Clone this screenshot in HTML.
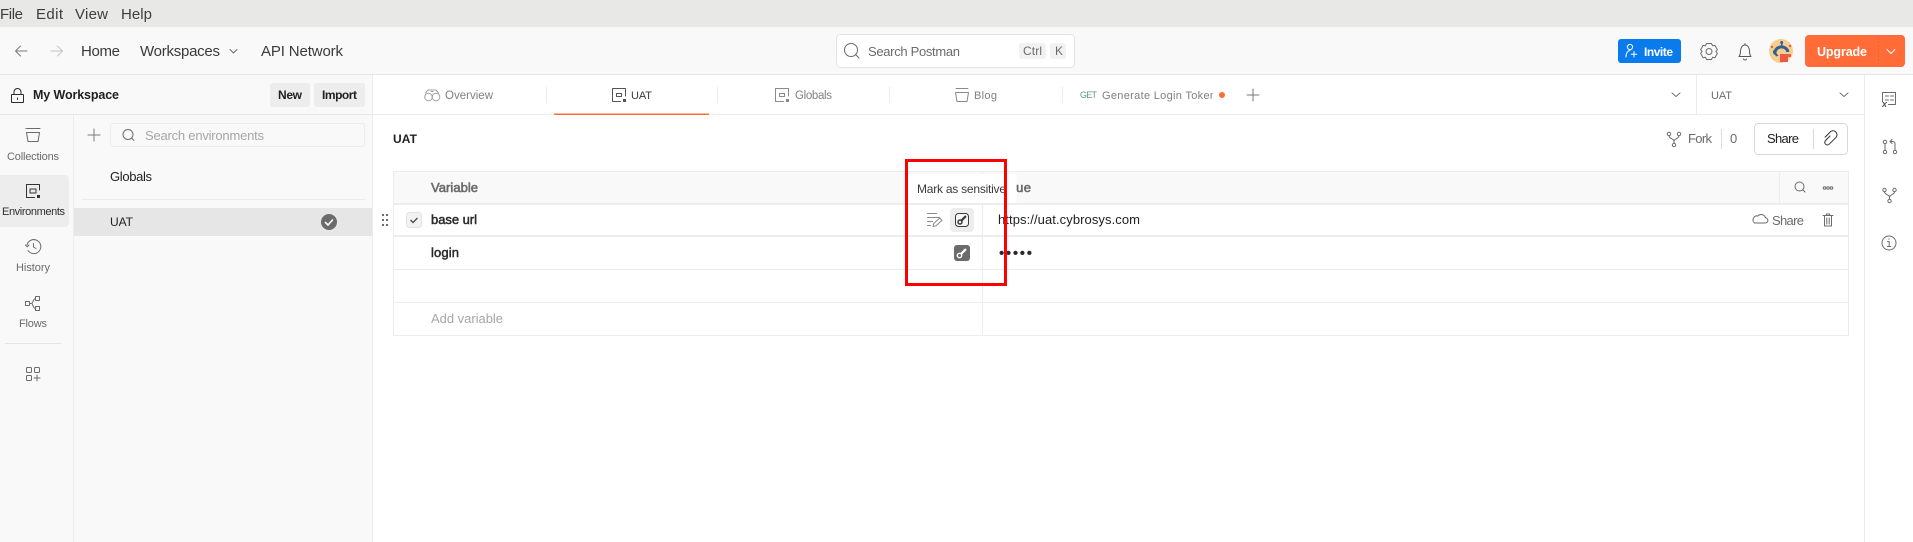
<!DOCTYPE html>
<html lang="en"><head><meta charset="utf-8"><title>Postman - UAT</title>
<style>
html,body{margin:0;padding:0;background:#fff;width:1913px;height:542px;overflow:hidden}
svg{display:block}
text{font-family:"Liberation Sans",Arial,sans-serif;font-size:13px;fill:#212121}
.b{font-weight:700}
.m{stroke:#2b2b2b;stroke-width:.5px;fill:#2b2b2b}
.mg{stroke:#6b6b6b;stroke-width:.6px;fill:#6b6b6b}
.g{fill:#6b6b6b}
.l{fill:#a6a6a6}
.s{font-size:12px}
.r{font-size:11px}
.t{font-size:11.5px}
.h{font-size:15px;fill:#3a3a3a}
.i{fill:none;stroke:#6b6b6b;stroke-width:1;stroke-linecap:round;stroke-linejoin:round}
</style></head><body>
<svg width="1913" height="542" viewBox="0 0 1913 542" xmlns="http://www.w3.org/2000/svg">
<defs><clipPath id="tc"><rect x="1100" y="85" width="113" height="20"/></clipPath></defs>

<!-- backgrounds -->
<rect width="1913" height="542" fill="#fff"/>
<rect width="1913" height="27" fill="#e8e8e7"/>
<rect y="27" width="1913" height="47" fill="#f9f9f9"/>
<rect y="74" width="1913" height="1" fill="#e6e6e6"/>
<rect y="75" width="373" height="467" fill="#f9f9f9"/>
<rect x="372" y="75" width="1" height="467" fill="#ededed"/>
<rect y="114" width="372" height="1" fill="#e6e6e6"/>
<rect x="373" y="114" width="1491" height="1" fill="#ededed"/>
<rect x="73" y="115" width="1" height="427" fill="#ededed"/>
<rect x="1864" y="75" width="1" height="467" fill="#ededed"/>

<!-- menu -->
<text x="0" y="19" textLength="23" style="font-size:15px;fill:#3d3d3d">File</text>
<text x="36" y="19" textLength="27" style="font-size:15px;fill:#3d3d3d">Edit</text>
<text x="75" y="19" textLength="33" style="font-size:15px;fill:#3d3d3d">View</text>
<text x="121" y="19" textLength="31" style="font-size:15px;fill:#3d3d3d">Help</text>

<!-- top header -->
<path class="i" d="M27 51H15.500M20.500 46l-5 5 5 5" style="stroke:#7a7a7a"/>
<path class="i" d="M51 51h11.500M57.500 46l5 5-5 5" style="stroke:#c4c4c4"/>
<text x="81" y="56" textLength="39" class="h">Home</text>
<text x="140" y="56" textLength="80" class="h">Workspaces</text>
<path class="i" d="M230 49.500l3.500 3.500 3.500-3.500"/>
<text x="261" y="56" textLength="82" class="h">API Network</text>

<!-- global search -->
<rect x="836.500" y="34.500" width="238" height="33" rx="4" fill="#fff" stroke="#e3e3e3"/>
<circle cx="851" cy="50" r="6.500" class="i"/><path class="i" d="M856 55l3 3"/>
<text x="868" y="56" textLength="92" class="g">Search Postman</text>
<rect x="1019" y="43" width="27" height="16" rx="3" fill="#f2f2f2"/>
<text x="1023" y="55" textLength="19" class="g s">Ctrl</text>
<rect x="1050" y="43" width="16" height="16" rx="3" fill="#f2f2f2"/>
<text x="1055" y="55" textLength="7" class="g s">K</text>

<!-- right header -->
<rect x="1618" y="39" width="63" height="24" rx="3" fill="#097bed"/>
<g class="i" style="stroke:#fff"><circle cx="1630" cy="47" r="2.600"/><path d="M1626 57c0-4 1.500-6 4-6.500M1634 51.500v5.500M1631.300 54.200h5.500"/></g>
<text x="1644" y="56" textLength="29" class="b s" style="fill:#fff">Invite</text>
<g class="i"><path d="M1706.500 43.500h5l1 2.200 2.400-.3 2.500 4.300-1.500 1.800 1.500 1.900-2.500 4.300-2.400-.4-1 2.200h-5l-1-2.200-2.400.4-2.500-4.300 1.500-1.900-1.500-1.800 2.500-4.300 2.400.3z"/><circle cx="1709" cy="51.500" r="3"/></g>
<g class="i" style="stroke:#555"><path d="M1739 56.500c1.300-1.500 1.500-3 1.500-5.500 0-3 1.800-6 4.500-6s4.500 3 4.500 6c0 2.500.2 4 1.500 5.500zM1743.500 59c.7 1.400 2.300 1.400 3 0M1745 43.500V45"/></g>
<circle cx="1781" cy="51" r="12" fill="#f6cf8e"/>
<path d="M1775 54a6.500 6 0 1 1 13-2" fill="none" stroke="#2f5f95" stroke-width="3"/>
<path d="M1773 50.500h3.500v3l2 2-2 1-3.500-3.500z" fill="#2f5f95"/>
<rect x="1781" y="41" width="1.500" height="5" fill="#2f5f95"/>
<circle cx="1781.700" cy="42.500" r="1.500" fill="#2f5f95"/>
<rect x="1780" y="54" width="8" height="8" fill="#ea5a48"/>
<rect x="1788" y="54" width="3" height="3" fill="#ea5a48"/>
<circle cx="1772" cy="47" r="1.200" fill="#ea5a48"/><circle cx="1790" cy="46" r="1.200" fill="#ea5a48"/>

<rect x="1805" y="35" width="100" height="32" rx="4" fill="#ff6c37"/>
<text x="1817" y="56" textLength="50" class="b" style="fill:#fff;font-size:12.500px">Upgrade</text>
<path d="M1878.500 38v26" stroke="#c9713a" stroke-dasharray="1.500 2"/>
<path class="i" d="M1887 49.500l4 4 4-4" style="stroke:#fff"/>

<!-- workspace row -->
<g class="i" style="stroke:#2b2b2b"><rect x="11.500" y="94.500" width="12" height="8" rx="0.500"/><path d="M14 94.500v-2.500a3.500 3.500 0 0 1 7 0v2.500"/><path d="M17.500 98v1.500"/></g>
<text x="33" y="99" textLength="86" class="b" style="font-size:12.500px">My Workspace</text>
<rect x="270" y="83" width="40" height="24" rx="3" fill="#ededed"/>
<text x="278" y="99" textLength="24" class="b s">New</text>
<rect x="314" y="83" width="51" height="24" rx="3" fill="#ededed"/>
<text x="322" y="99" textLength="35" class="b s">Import</text>

<!-- left rail -->
<g class="i"><path d="M26 128.500h14M26.500 132.500h13l-1.500 9h-10z"/></g>
<text x="7" y="160" textLength="52" class="g r">Collections</text>
<rect x="-4" y="175" width="73" height="52" rx="4" fill="#ededed"/>
<g class="i" style="stroke:#333"><path d="M39.500 190v-5.500h-13v13h8"/><rect x="30" y="189" width="6" height="4"/></g>
<rect x="37" y="195" width="3" height="3" fill="#333"/>
<text x="2" y="215" textLength="63" class="r" style="fill:#2f2f2f">Environments</text>
<g class="i"><path d="M27 245a7 7 0 1 1 1 5.500M25.500 245l1.800 1.800 1.700-1.800M33.500 243.500v3.500l2.500 1.500"/></g>
<text x="16" y="271" textLength="34" class="g r">History</text>
<g class="i"><rect x="25.500" y="301.500" width="4" height="4"/><rect x="35.500" y="296.500" width="4" height="4"/><rect x="35.500" y="306.500" width="4" height="4"/><path d="M29.500 303.500h2c1.500 0 1.500-5 4-5M29.500 303.500h2c1.500 0 1.500 5 4 5"/></g>
<text x="19" y="327" textLength="28" class="g r">Flows</text>
<rect x="5" y="343" width="56" height="1" fill="#e6e6e6"/>
<g class="i"><rect x="26.500" y="367.500" width="5" height="5" rx="1"/><rect x="34.500" y="367.500" width="5" height="5" rx="1"/><rect x="26.500" y="375.500" width="5" height="5" rx="1"/><path d="M37 375v6M34 378h6"/></g>

<!-- env list -->
<path class="i" d="M94 129v12M88 135h12" style="stroke:#7a7a7a"/>
<rect x="110.500" y="123.500" width="254" height="23" rx="2" fill="#f9f9f9" stroke="#ededed"/>
<circle cx="128" cy="134.500" r="5" class="i"/><path class="i" d="M132 138.500l2 2"/>
<text x="145" y="140" textLength="119" class="l">Search environments</text>
<text x="110" y="181" textLength="42">Globals</text>
<rect x="82" y="199" width="283" height="1" fill="#ededed"/>
<rect x="74" y="208" width="298" height="28" fill="#e6e6e6"/>
<text x="110" y="226" textLength="23" class="s">UAT</text>
<circle cx="329" cy="222" r="8" fill="#6b6b6b"/>
<path d="M325.500 222.500l2.500 2.500 4.500-5" fill="none" stroke="#fff" stroke-width="1.600" stroke-linecap="round" stroke-linejoin="round"/>

<!-- tabs -->
<g class="i" style="stroke:#a0a0a0"><circle cx="428.500" cy="97" r="3.800"/><circle cx="436" cy="97" r="3.800"/><path d="M425.500 93l2.500-3h8l2.500 3M431 91.500h2"/></g>
<text x="445" y="99" textLength="48" class="t" style="fill:#808080">Overview</text>
<rect x="546" y="87" width="1" height="16" fill="#ededed"/>
<g class="i" style="stroke:#555"><path d="M625.500 96v-7.500h-13v13h8"/><rect x="616.500" y="93.500" width="5" height="3"/></g>
<rect x="623" y="99" width="3" height="3" fill="#555"/>
<text x="631" y="99" textLength="21" class="r" style="fill:#3a3a3a">UAT</text>
<rect x="554" y="113.500" width="155" height="1.500" fill="#ff6c37"/>
<rect x="717" y="87" width="1" height="16" fill="#ededed"/>
<g class="i" style="stroke:#8a8a8a"><path d="M788.500 96v-7.500h-13v13h8"/><rect x="779.500" y="93.500" width="5" height="3"/></g>
<rect x="786" y="99" width="3" height="3" fill="#8a8a8a"/>
<text x="795" y="99" textLength="37" class="t" style="fill:#808080">Globals</text>
<rect x="889" y="87" width="1" height="16" fill="#ededed"/>
<g class="i" style="stroke:#8a8a8a"><path d="M956 88.500h12M955.500 92.500h13l-1.500 9h-10z"/></g>
<text x="974" y="99" textLength="23" class="r" style="fill:#808080">Blog</text>
<rect x="1062" y="87" width="1" height="16" fill="#ededed"/>
<text x="1080" y="98" textLength="17" style="font-size:9px;fill:#5a9e7c">GET</text>
<text x="1102" y="99" textLength="114" class="r" style="fill:#808080" clip-path="url(#tc)">Generate Login Token</text>
<circle cx="1222" cy="95" r="3" fill="#ff6c37"/>
<path class="i" d="M1253 89v12M1247 95h12" style="stroke:#7a7a7a"/>
<path class="i" d="M1672 93l4 3.500 4-3.500"/>
<rect x="1696" y="75" width="1" height="40" fill="#ededed"/>
<text x="1711" y="99" textLength="21" class="r" style="fill:#6b6b6b">UAT</text>
<path class="i" d="M1840 93l4 3.500 4-3.500"/>

<!-- title + actions -->
<text x="393" y="143" textLength="24" class="b" style="font-size:12px">UAT</text>
<g class="i"><circle cx="1669" cy="134" r="1.700"/><circle cx="1679" cy="134" r="1.700"/><circle cx="1674" cy="145" r="1.700"/><path d="M1669 135.700c0 3 5 3 5 5.500v2M1679 135.700c0 3-5 3-5 5.500"/></g>
<text x="1688" y="143" textLength="24" class="g">Fork</text>
<rect x="1721" y="129" width="1" height="20" fill="#dcdcdc"/>
<text x="1730" y="143" textLength="7" class="g">0</text>
<rect x="1754.500" y="123.500" width="93" height="31" rx="4" fill="#fff" stroke="#d8d8d8"/>
<text x="1767" y="143" textLength="32">Share</text>
<rect x="1813" y="129" width="1" height="20" fill="#d8d8d8"/>
<g class="i" style="stroke:#333"><path d="M1830 136l-4.500 4.500a2.600 2.600 0 0 0 3.700 3.700l7-7a4 4 0 0 0-5.600-5.600l-5.500 5.500"/></g>

<!-- table -->
<rect x="393.500" y="171.500" width="1455" height="164" fill="#fff" stroke="#ededed"/>
<rect x="394" y="172" width="1454" height="31" fill="#f9f9f9"/>
<rect x="393" y="203" width="1456" height="2" fill="#ededed"/>
<rect x="393" y="235" width="1456" height="2" fill="#ededed"/>
<rect x="393" y="269" width="1456" height="1" fill="#ededed"/>
<rect x="393" y="302" width="1456" height="1" fill="#ededed"/>
<rect x="982" y="171" width="1" height="164" fill="#ededed"/>
<rect x="1779" y="172" width="1" height="31" fill="#ededed"/>
<text x="431" y="192" textLength="47" class="mg">Variable</text>
<text x="997" y="192" textLength="34" class="mg">Value</text>
<circle cx="1799.500" cy="186.500" r="4.500" class="i"/><path class="i" d="M1803 190l2 2"/>
<g class="i"><circle cx="1824.500" cy="188" r="1.300"/><circle cx="1828" cy="188" r="1.300"/><circle cx="1831.500" cy="188" r="1.300"/></g>

<!-- row 1 -->
<g fill="#6b6b6b"><rect x="382" y="214" width="2" height="2"/><rect x="386" y="214" width="2" height="2"/><rect x="382" y="219" width="2" height="2"/><rect x="386" y="219" width="2" height="2"/><rect x="382" y="224" width="2" height="2"/><rect x="386" y="224" width="2" height="2"/></g>
<rect x="406.500" y="212.500" width="15" height="15" rx="3" fill="#f2f2f2" stroke="#e2e2e2"/>
<path d="M410.500 220l2.500 2.500 4.500-4.500" fill="none" stroke="#555" stroke-width="1.500"/>
<text x="431" y="224" textLength="46" class="m">base url</text>
<g class="i" style="stroke:#8a8a8a"><path d="M927.500 213.500h9M927.500 217.500h12M927.500 221.500h5M927.500 225.500h3M933 226.500l.7-3 6-5.500 2.300 2.300-6 5.500z"/></g>
<rect x="950" y="208" width="24" height="24" rx="4" fill="#ededed"/>
<rect x="955.500" y="213.500" width="13" height="13" rx="3" fill="#f5f5f5" stroke="#3a3a3a"/>
<g fill="none" stroke="#3a3a3a"><circle cx="960" cy="222" r="2" stroke-width="1.500"/><path d="M961.500 220.500l3.800-3.800" stroke-width="2.200" stroke-linecap="round"/></g>
<text x="998" y="224" textLength="142">https://uat.cybrosys.com</text>
<path class="i" d="M1754.500 223h10.500a2.600 2.600 0 0 0 .5-5.200 4.500 4.500 0 0 0-7.700-1.800 4 4 0 0 0-3.300 7z"/>
<text x="1772" y="225" textLength="32" class="g">Share</text>
<g class="i"><path d="M1823 215.500h10M1826 215.500l.5-1.500h3l.5 1.500M1824.500 215.500v10.500h7v-10.500M1826.800 218v6M1829.200 218v6"/></g>

<!-- row 2 -->
<text x="431" y="257" textLength="28" class="m">login</text>
<rect x="954" y="245" width="16" height="16" rx="3" fill="#6b6b6b"/>
<g fill="none" stroke="#fff"><circle cx="959.500" cy="255.500" r="2.200" stroke-width="1.400"/><path d="M961.500 253.500l3.800-3.800" stroke-width="2.200" stroke-linecap="round"/></g>
<text x="999" y="258" textLength="33" style="font-size:15px;font-weight:700;fill:#2b2b2b">•••••</text>

<!-- row 4 -->
<text x="431" y="323" textLength="72" class="l">Add variable</text>

<!-- tooltip -->
<rect x="908" y="174" width="108.500" height="29" fill="#fff"/>
<text x="917" y="193" textLength="89" class="s" style="fill:#3a3a3a">Mark as sensitive</text>

<!-- annotation -->
<rect x="906.500" y="160.500" width="99" height="124" fill="none" stroke="#f00" stroke-width="3"/>

<!-- right rail -->
<g class="i"><path d="M1882.500 102v-9.500h13v12h-7M1885.500 96h3M1885.500 100h3M1890.500 96h3M1890.500 100h3"/></g>
<text x="1882" y="107" class="b" style="font-size:9px;font-style:italic;fill:#555">x</text>
<g class="i"><circle cx="1885" cy="152" r="1.700"/><circle cx="1895" cy="152" r="1.700"/><circle cx="1885" cy="142" r="1.700"/><path d="M1885 143.700v6.600M1895 150.300V144c0-1.500-1-2.500-2.500-2.500h-2M1892 139.500l-2 2 2 2"/></g>
<g class="i"><circle cx="1884.500" cy="190" r="1.700"/><circle cx="1894.500" cy="190" r="1.700"/><circle cx="1889.500" cy="201" r="1.700"/><path d="M1884.500 191.700c0 3 5 3 5 5.500v2M1894.500 191.700c0 3-5 3-5 5.500"/></g>
<circle cx="1889" cy="243" r="7" class="i"/><path class="i" d="M1887.500 241.500h1.700v4.500M1887.300 246.500h3.500M1889 238.800v.4"/>
</svg>
</body></html>
